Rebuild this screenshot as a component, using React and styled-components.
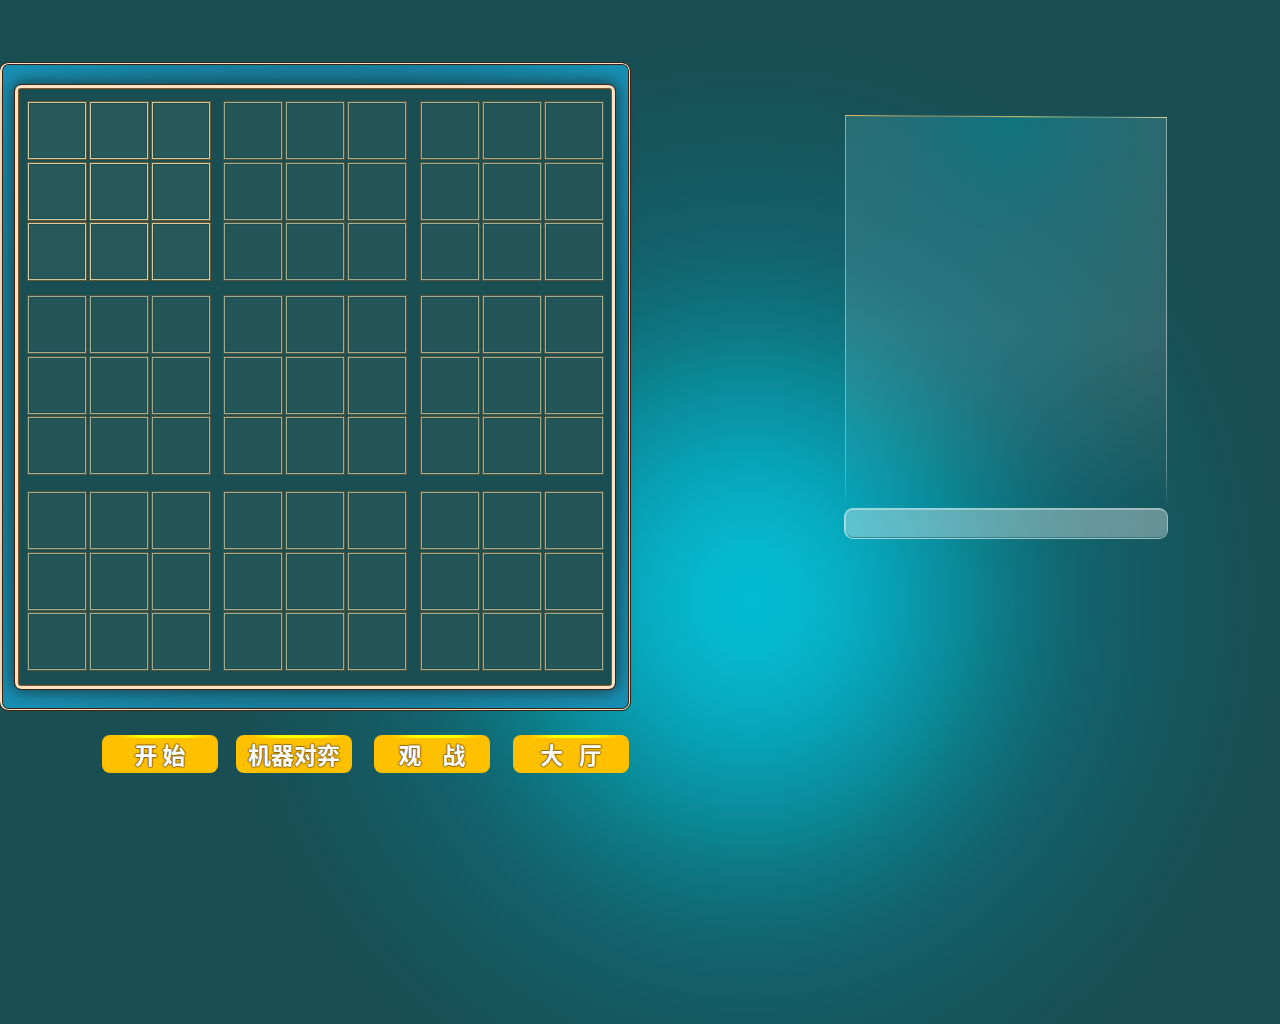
import React from 'react';
import styled, { createGlobalStyle } from 'styled-components';

const GlobalStyle = createGlobalStyle`
  *, *::before, *::after { box-sizing: border-box; }
  body {
    margin: 0;
    font-family: "Noto Sans CJK SC", "Liberation Sans", sans-serif;
    background: #194e53;
  }
`;

const Page = styled.div`
  display: flex;
  align-items: flex-start;
  min-height: 100vh;
  padding-top: 62px;
  background: radial-gradient(
    ellipse 550px 580px at 750px 600px,
    #04bbd4 0,
    #05b7cf 9%,
    #07adc2 18%,
    #089eb1 27%,
    #0a8c9b 37%,
    #0d7a86 46%,
    #106c76 54%,
    #12626b 62%,
    #155a62 72%,
    #17535a 84%,
    #194e53 100%
  ), #194e53;
`;

const Game = styled.main`
  flex: none;
`;

const Frame = styled.section`
  border: solid #fbe3c3;
  border-width: 1px 1px 1px 2px;
  margin: 1px 1px 1px 0;
  border-radius: 8px;
  outline: 1px solid #3c2313;
  padding: 20px 13px 19px 12px;
  box-shadow: inset 0 0 0 1px #3c2313;
  background: radial-gradient(ellipse at center, #177088 50%, #188fb5 96%);
`;

const Board = styled.div`
  margin: 1px;
  border: 3px solid #fde3c4;
  border-radius: 6px;
  outline: 1px solid #3c2313;
  box-shadow: inset 0 0 0 1px #8a5522, 0 0 16px 3px #17454c;
  background: #194e53;
  padding: 13px 8px 15px 9px;
  display: grid;
  grid-template-columns: 196px 197px 184px;
  grid-template-rows: 194px 196px 180px;
`;

const Block = styled.div`
  display: grid;
  grid-template-columns: repeat(3, 60px);
  grid-template-rows: 61px 60px 59px;
  column-gap: 2px;
`;

const Cell = styled.button`
  height: 59px;
  padding: 0;
  border: 1px solid ${(p) => (p.$bright ? '#6b5632' : '#57533a')};
  border-radius: 0;
  background: ${(p) => (p.$bright ? '#28595a' : '#245558')};
  box-shadow:
    inset 0 0 0 1px ${(p) => (p.$bright ? '#d0cba0' : '#a2ae8d')},
    inset 0 0 0 2px #1c4f54;
`;

const Actions = styled.nav`
  display: grid;
  grid-template-columns: 134px 138px 139px 116px;
  padding: 24px 0 0 102px;
`;

const Action = styled.button`
  width: 116px;
  height: 38px;
  padding: 0;
  border: 0;
  border-radius: 8px;
  font: 700 23px/38px "Noto Sans CJK SC", "Liberation Sans", sans-serif;
  color: #fff;
  white-space: pre;
  text-shadow: 1px 0 1px #8c6a14, -1px 0 1px #8c6a14, 0 1px 1px #8c6a14, 0 -1px 1px #8c6a14;
  background:
    linear-gradient(90deg, transparent 14%, #ffff00 36%, #ffff00 70%, transparent 94%) top / 100% 3px no-repeat,
    #ffc000;
`;

const Side = styled.aside`
  width: 324px;
  margin: 53px 0 0 213px;
`;

const Screen = styled.div`
  position: relative;
  height: 393px;
  margin: 0 1px;
  background:
    radial-gradient(ellipse 270px 300px at 50% 0, rgba(4, 120, 132, 0.75), rgba(4, 120, 132, 0.35) 40%, transparent),
    linear-gradient(180deg, rgba(255, 255, 255, 0.13), rgba(255, 255, 255, 0.12) 55%, transparent 98%);
  clip-path: polygon(0 0, 100% 2px, 100% 100%, 0 100%);

  &::before {
    content: '';
    position: absolute;
    inset: 0;
    border: solid;
    border-width: 0 1px;
    border-image: linear-gradient(rgba(200, 215, 210, 0.6) 60%, rgba(200, 230, 230, 0.4) 90%, transparent) 1;
  }
`;

const Edge = styled.svg`
  position: absolute;
  top: 0;
  left: 0;
  width: 100%;
  height: 3px;
`;

const Message = styled.input`
  display: block;
  width: 100%;
  height: 31px;
  padding: 0 12px;
  border: solid rgba(255, 255, 255, 0.6);
  border-width: 2px 1px 1px 2px;
  border-radius: 9px;
  font: 16px "Noto Sans CJK SC", "Liberation Sans", sans-serif;
  color: #fff;
  background: rgba(225, 235, 235, 0.4);
  background-clip: padding-box;
  box-shadow: inset 0 -1px 0 rgba(30, 110, 120, 0.7);
`;

const blocks = Array.from({ length: 9 }, (_, i) => i);
const actions = ['开 始', '机器对弈', '观    战', '大   厅'];

export default function App() {
  return (
    <>
      <GlobalStyle />
      <Page>
        <Game>
          <Frame>
            <Board>
              {blocks.map((b) => (
                <Block key={b}>
                  {blocks.map((c) => (
                    <Cell key={c} type="button" $bright={b === 0} aria-label={`${b + 1}-${c + 1}`} />
                  ))}
                </Block>
              ))}
            </Board>
          </Frame>
          <Actions>
            {actions.map((a) => (
              <Action key={a} type="button">{a}</Action>
            ))}
          </Actions>
        </Game>
        <Side>
          <Screen>
            <Edge viewBox="0 0 322 3" preserveAspectRatio="none" aria-hidden="true">
              <defs>
                <linearGradient id="edge" gradientUnits="userSpaceOnUse" x1="0" y1="0" x2="322" y2="0">
                  <stop offset="0" stopColor="#e8b95c" />
                  <stop offset="0.3" stopColor="#a08f58" />
                  <stop offset="0.55" stopColor="#b5b665" />
                  <stop offset="0.8" stopColor="#6d9a84" />
                  <stop offset="1" stopColor="#d5cf8e" />
                </linearGradient>
              </defs>
              <path d="M0 .5L322 2.5" stroke="url(#edge)" strokeWidth="1.2" />
            </Edge>
          </Screen>
          <Message type="text" aria-label="消息" />
        </Side>
      </Page>
    </>
  );
}
